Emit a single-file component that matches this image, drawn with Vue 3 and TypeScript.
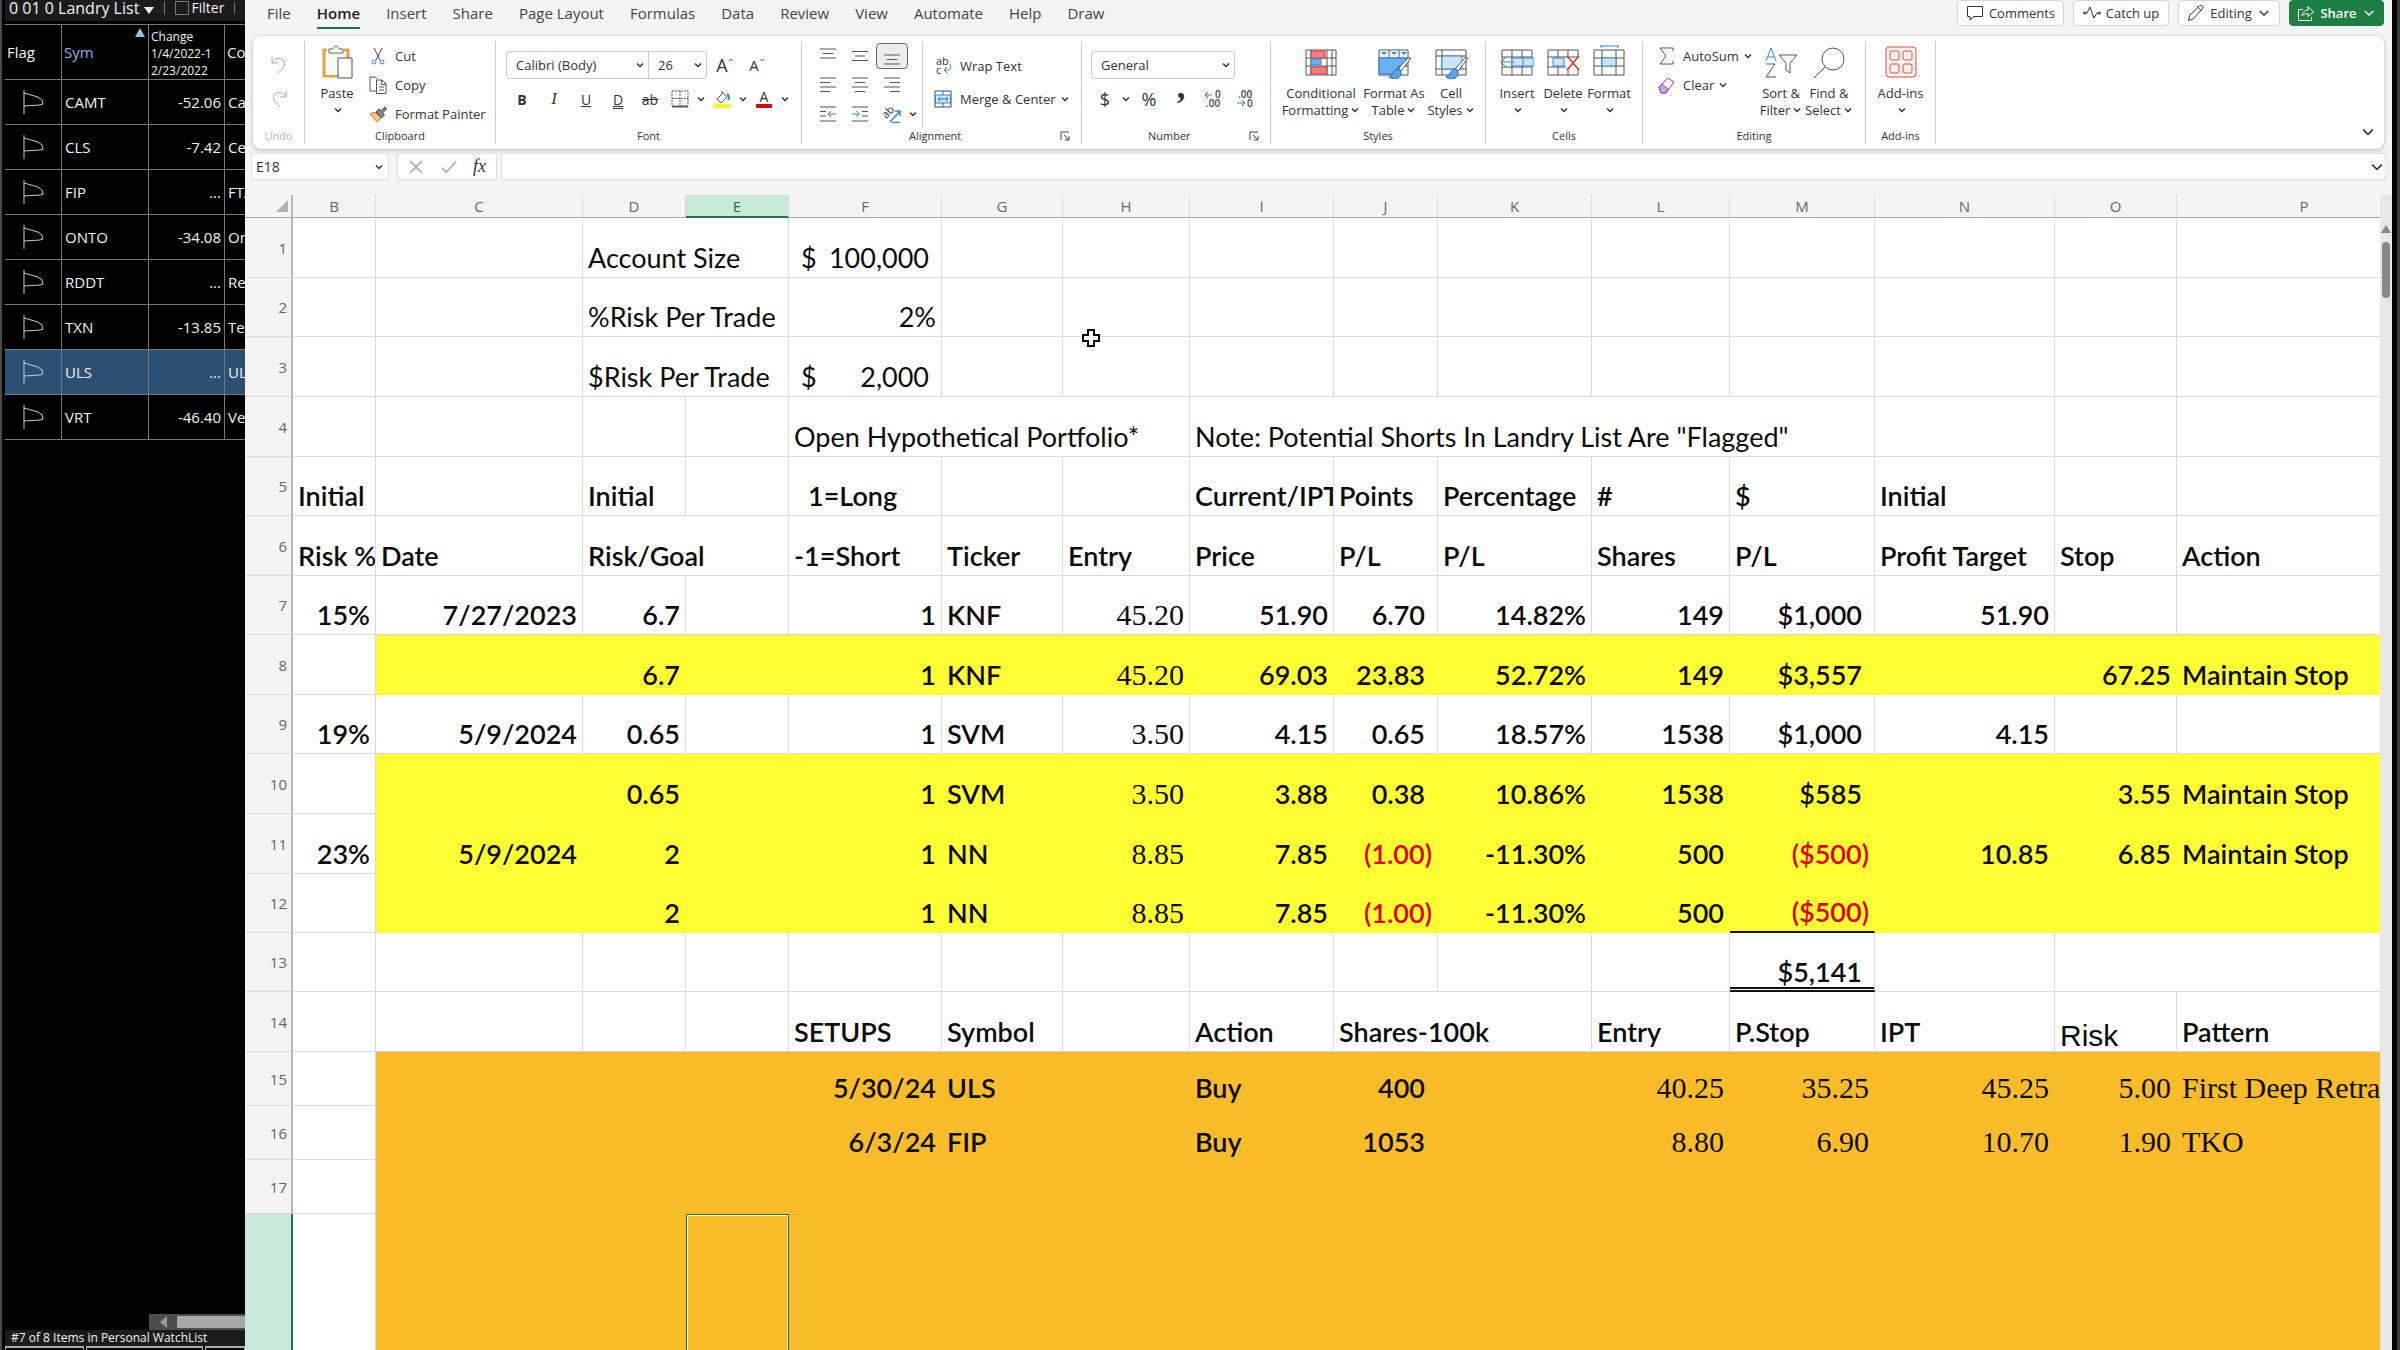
<script setup lang="ts">
import { h, ref } from 'vue'

const Chevron = () =>
  h('svg', { class: 'chev', viewBox: '0 0 10 10', 'aria-hidden': 'true' }, [
    h('path', { d: 'M2 3.5l3 3 3-3' }),
  ])

const Launcher = () =>
  h('svg', { class: 'launcher', viewBox: '0 0 10 10', 'aria-hidden': 'true' }, [
    h('path', { d: 'M1 9V1h8M4 4l5 5M9 5v4H5' }),
  ])

interface Quote {
  sym: string
  change: string
  company: string
}

const quotes: Quote[] = [
  { sym: 'CAMT', change: '-52.06', company: 'Ca' },
  { sym: 'CLS', change: '-7.42', company: 'Ce' },
  { sym: 'FIP', change: '...', company: 'FTA' },
  { sym: 'ONTO', change: '-34.08', company: 'On' },
  { sym: 'RDDT', change: '...', company: 'Re' },
  { sym: 'TXN', change: '-13.85', company: 'Te' },
  { sym: 'ULS', change: '...', company: 'UL' },
  { sym: 'VRT', change: '-46.40', company: 'Ve' },
]
const selectedSym = ref('ULS')

const tabs = [
  'File', 'Home', 'Insert', 'Share', 'Page Layout', 'Formulas',
  'Data', 'Review', 'View', 'Automate', 'Help', 'Draw',
]
const activeTab = ref('Home')
const fontName = ref('Calibri (Body)')
const fontSize = ref('26')
const numberFormat = ref('General')
const nameBox = ref('E18')
const formula = ref('')

const columns = [
  { id: 'B', w: 83 }, { id: 'C', w: 207 }, { id: 'D', w: 103 }, { id: 'E', w: 103 },
  { id: 'F', w: 153 }, { id: 'G', w: 121 }, { id: 'H', w: 127 }, { id: 'I', w: 144 },
  { id: 'J', w: 104 }, { id: 'K', w: 154 }, { id: 'L', w: 138 }, { id: 'M', w: 145 },
  { id: 'N', w: 180 }, { id: 'O', w: 122 }, { id: 'P', w: 0 },
]

// text, class names, number of columns covered
type Cell = [string, string?, number?]
interface Row {
  n: number
  h: number
  kind?: string
  cells: Record<string, Cell>
}

const rows: Row[] = [
  { n: 1, h: 60, kind: 'plain', cells: { D: ['Account Size', '', 2], F: ['100,000', 'money'] } },
  { n: 2, h: 59, kind: 'plain', cells: { D: ['%Risk Per Trade', '', 2], F: ['2%', 'r'] } },
  { n: 3, h: 60, kind: 'plain', cells: { D: ['$Risk Per Trade', '', 2], F: ['2,000', 'money'] } },
  {
    n: 4, h: 60, kind: 'plain',
    cells: {
      F: ['Open Hypothetical Portfolio*', '', 3],
      I: ['Note: Potential Shorts In Landry List Are "Flagged"', '', 5],
    },
  },
  {
    n: 5, h: 59,
    cells: {
      B: ['Initial'], D: ['Initial'], F: ['1=Long', 'indent'], I: ['Current/IPT'], J: ['Points'],
      K: ['Percentage'], L: ['#'], M: ['$'], N: ['Initial'],
    },
  },
  {
    n: 6, h: 60,
    cells: {
      B: ['Risk %'], C: ['Date'], D: ['Risk/Goal', '', 2], F: ['-1=Short'], G: ['Ticker'],
      H: ['Entry'], I: ['Price'], J: ['P/L'], K: ['P/L'], L: ['Shares'], M: ['P/L'],
      N: ['Profit Target'], O: ['Stop'], P: ['Action'],
    },
  },
  {
    n: 7, h: 59,
    cells: {
      B: ['15%', 'r'], C: ['7/27/2023', 'r'], D: ['6.7', 'r'], F: ['1', 'r'], G: ['KNF'],
      H: ['45.20', 'r serif'], I: ['51.90', 'r'], J: ['6.70', 'acct'], K: ['14.82%', 'r'],
      L: ['149', 'r'], M: ['$1,000', 'acct'], N: ['51.90', 'r'],
    },
  },
  {
    n: 8, h: 60, kind: 'yellow',
    cells: {
      D: ['6.7', 'r'], F: ['1', 'r'], G: ['KNF'], H: ['45.20', 'r serif'], I: ['69.03', 'r'],
      J: ['23.83', 'acct'], K: ['52.72%', 'r'], L: ['149', 'r'], M: ['$3,557', 'acct'],
      O: ['67.25', 'r'], P: ['Maintain Stop'],
    },
  },
  {
    n: 9, h: 59,
    cells: {
      B: ['19%', 'r'], C: ['5/9/2024', 'r'], D: ['0.65', 'r'], F: ['1', 'r'], G: ['SVM'],
      H: ['3.50', 'r serif'], I: ['4.15', 'r'], J: ['0.65', 'acct'], K: ['18.57%', 'r'],
      L: ['1538', 'r'], M: ['$1,000', 'acct'], N: ['4.15', 'r'],
    },
  },
  {
    n: 10, h: 60, kind: 'yellow',
    cells: {
      D: ['0.65', 'r'], F: ['1', 'r'], G: ['SVM'], H: ['3.50', 'r serif'], I: ['3.88', 'r'],
      J: ['0.38', 'acct'], K: ['10.86%', 'r'], L: ['1538', 'r'], M: ['$585', 'acct'],
      O: ['3.55', 'r'], P: ['Maintain Stop'],
    },
  },
  {
    n: 11, h: 60, kind: 'yellow',
    cells: {
      B: ['23%', 'r'], C: ['5/9/2024', 'r'], D: ['2', 'r'], F: ['1', 'r'], G: ['NN'],
      H: ['8.85', 'r serif'], I: ['7.85', 'r'], J: ['(1.00)', 'r neg'], K: ['-11.30%', 'r'],
      L: ['500', 'r'], M: ['($500)', 'r neg'], N: ['10.85', 'r'], O: ['6.85', 'r'],
      P: ['Maintain Stop'],
    },
  },
  {
    n: 12, h: 59, kind: 'yellow',
    cells: {
      D: ['2', 'r'], F: ['1', 'r'], G: ['NN'], H: ['8.85', 'r serif'], I: ['7.85', 'r'],
      J: ['(1.00)', 'r neg'], K: ['-11.30%', 'r'], L: ['500', 'r'], M: ['($500)', 'r neg subtotal'],
    },
  },
  { n: 13, h: 59, cells: { M: ['$5,141', 'acct total'], O: ['', '', 2] } },
  {
    n: 14, h: 60,
    cells: {
      F: ['SETUPS'], G: ['Symbol'], I: ['Action'], J: ['Shares-100k', '', 2], L: ['Entry'],
      M: ['P.Stop'], N: ['IPT'], O: ['Risk', 'sans'], P: ['Pattern'],
    },
  },
  {
    n: 15, h: 54, kind: 'orange',
    cells: {
      F: ['5/30/24', 'r'], G: ['ULS'], I: ['Buy'], J: ['400', 'acct'], L: ['40.25', 'r serif'],
      M: ['35.25', 'r serif'], N: ['45.25', 'r serif'], O: ['5.00', 'r serif'],
      P: ['First Deep Retra', 'serif'],
    },
  },
  {
    n: 16, h: 54, kind: 'orange',
    cells: {
      F: ['6/3/24', 'r'], G: ['FIP'], I: ['Buy'], J: ['1053', 'acct'], L: ['8.80', 'r serif'],
      M: ['6.90', 'r serif'], N: ['10.70', 'r serif'], O: ['1.90', 'r serif'], P: ['TKO', 'serif'],
    },
  },
  { n: 17, h: 54, kind: 'orange', cells: {} },
  { n: 18, h: 240, kind: 'orange', cells: { E: ['', 'selected'] } },
]

function cellsOf(row: Row) {
  const out: { id: string; text: string; cls: string; span: number }[] = []
  for (let i = 0; i < columns.length; ) {
    const id = columns[i].id
    const [text, cls, span] = row.cells[id] ?? ['']
    out.push({ id, text, cls: (cls ?? '') + (id === 'B' ? ' first' : ''), span: span ?? 1 })
    i += span ?? 1
  }
  return out
}
</script>

<template>
  <div class="screen">
    <aside class="watch">
      <header class="watch-title">
        <button class="list-name" type="button">0 01 0 Landry List <i class="tri-down"></i></button>
        <span class="bar"></span>
        <label class="filter"><input type="checkbox" />Filter</label>
        <span class="bar"></span>
      </header>
      <table class="quotes">
        <colgroup><col class="q-flag" /><col class="q-sym" /><col class="q-chg" /><col /></colgroup>
        <thead>
          <tr>
            <th>Flag</th>
            <th class="sorted">Sym<i class="tri-up"></i></th>
            <th class="change-head">Change<br />1/4/2022-1<br />2/23/2022</th>
            <th>Co</th>
          </tr>
        </thead>
        <tbody>
          <tr v-for="q in quotes" :key="q.sym" :class="{ on: q.sym === selectedSym }" @click="selectedSym = q.sym">
            <td class="flag-cell">
              <svg class="flag" viewBox="0 0 22 26" aria-hidden="true"><path d="M2 1v24M2 4l14 4 4 3 1 4-3 1-16 1" /></svg>
            </td>
            <td>{{ q.sym }}</td>
            <td class="num">{{ q.change }}</td>
            <td>{{ q.company }}</td>
          </tr>
        </tbody>
      </table>
      <div class="watch-scroll"><i class="tri-left"></i><span class="watch-thumb"></span></div>
      <footer class="watch-status">#7 of 8 Items in Personal WatchList</footer>
      <div class="watch-tabs"><span></span><span></span><span></span></div>
    </aside>

    <main class="excel">
      <div class="menu">
        <nav class="tabs">
          <button v-for="t in tabs" :key="t" type="button" :class="{ active: t === activeTab }" @click="activeTab = t">{{ t }}</button>
        </nav>
        <div class="actions">
          <button type="button" class="w-comments">
            <svg viewBox="0 0 18 18"><path d="M1.500 2.500h15v10H8l-4 3.500v-3.500H1.500z" /></svg>Comments
          </button>
          <button type="button" class="w-catch">
            <svg viewBox="0 0 18 18"><path d="M1 9h3l3-6 4 11 3-5h3" /><circle cx="1.500" cy="9" r="1" /><circle cx="16.500" cy="9" r="1" /></svg>Catch up
          </button>
          <button type="button" class="w-editing">
            <svg viewBox="0 0 18 18"><path d="M1.500 16.500l1.200-5L12.500 1.700c2-1.500 4.500 1 3 3L5.800 15.200zM11 3.500l3.300 3.300" /></svg>Editing<Chevron />
          </button>
          <button type="button" class="share">
            <svg viewBox="0 0 18 18"><path d="M6 5.500H1.500v11h13V13M5 12c.5-4 3-6 6-6V2.500L16.500 8 11 12.500V9.500c-2.500 0-4.500.5-6 2.500z" /></svg>Share<Chevron />
          </button>
        </div>
      </div>

      <section class="ribbon">
        <div class="group g-undo">
          <div class="body stack">
            <button type="button" class="tool" aria-label="Undo"><svg viewBox="0 0 18 20"><path d="M2 2v6h6M2 8c3-5 8-6 11-3s2 7-5 13" /></svg></button>
            <button type="button" class="tool" aria-label="Redo"><svg viewBox="0 0 18 20"><path d="M16 2v6h-6M16 8C13 3 8 2 5 5s-2 7 5 13" /></svg></button>
          </div>
          <div class="label">Undo</div>
        </div>

        <div class="group g-clip">
          <div class="body">
            <button type="button" class="big w56">
              <svg viewBox="0 0 34 34">
                <path d="M7 5H4v26h14M24 5h4v8" stroke="#e8a33d" stroke-width="3" />
                <path d="M6 7h19v6h-8v17H6z" fill="#fafafa" stroke="none" />
                <path d="M9 8V4h4c0-4 6-4 6 0h4v4z" fill="#fff" stroke="#666" />
                <path d="M18 13h14v20H18z" fill="#fff" stroke="#555" />
              </svg>
              <span>Paste</span><span><Chevron /></span>
            </button>
            <div class="list">
              <button type="button"><svg viewBox="0 0 18 18"><path d="M5 1l6 12M13 1L7 13" stroke="#444" /><circle cx="5" cy="15" r="2" stroke="#2b88d8" /><circle cx="13" cy="15" r="2" stroke="#2b88d8" /></svg>Cut</button>
              <button type="button"><svg viewBox="0 0 18 18"><path d="M7 15H1V1h5l2 2" /><path d="M7.500 4H13l4 4v9.500H7.500zM12.500 4v4.500H17M10 11h5M10 14h5" /></svg>Copy</button>
              <button type="button"><svg viewBox="0 0 18 18"><path d="M1 9l5-2 6 6-4 4z" fill="#f7c58f" stroke="#d9782d" /><path d="M7 7l3-3 2 2 4-4 1.500 2-4 4 2 2-3 3z" fill="#888" stroke="#444" /></svg>Format Painter</button>
            </div>
          </div>
          <div class="label">Clipboard</div>
        </div>

        <div class="group g-font">
          <div class="body stack two">
            <div class="line">
              <div class="combo">
                <span class="pick font-name"><select v-model="fontName" aria-label="Font"><option>Calibri (Body)</option><option>Arial</option></select><Chevron /></span>
                <span class="pick font-size"><select v-model="fontSize" aria-label="Font size"><option>26</option><option>28</option></select><Chevron /></span>
              </div>
              <button type="button" class="tool" aria-label="Grow font"><span class="grow">A</span><svg class="caret" viewBox="0 0 6 6"><path d="M1 4l2-2 2 2" /></svg></button>
              <button type="button" class="tool" aria-label="Shrink font"><span class="shrink">A</span><svg class="caret" viewBox="0 0 6 6"><path d="M1 2l2 2 2-2" /></svg></button>
            </div>
            <div class="line">
              <button type="button" class="tool"><b>B</b></button>
              <button type="button" class="tool"><i class="ital">I</i></button>
              <button type="button" class="tool"><u>U</u></button>
              <button type="button" class="tool"><u class="dbl">D</u></button>
              <button type="button" class="tool"><s>ab</s></button>
              <button type="button" class="tool n" aria-label="Borders"><svg viewBox="0 0 18 18"><path d="M1 1h16v15M1 1v15M9 1v15M1 8.500h16" stroke-dasharray="2 1" /><path d="M1 16.500h16" stroke-width="2" /></svg></button><Chevron />
              <button type="button" class="tool n" aria-label="Fill color"><svg viewBox="0 0 18 18"><path d="M9 1v3M9 2l5 5-6 6-4-4 5-5" /><path d="M14 4c2 1 2 4 1.500 6" stroke="#2b88d8" stroke-width="2" /><path d="M0 16h18" stroke="#fbf22e" stroke-width="4" /></svg></button><Chevron />
              <button type="button" class="tool n" aria-label="Font color"><span class="font-color">A</span></button><Chevron />
            </div>
          </div>
          <div class="label">Font</div>
        </div>

        <div class="group g-align">
          <div class="body">
            <div class="aligns">
              <button type="button" aria-label="Top align"><svg viewBox="0 0 18 18"><path d="M1 2h16M4 6.500h10M1 11h16" /></svg></button>
              <button type="button" aria-label="Middle align"><svg viewBox="0 0 18 18"><path d="M1 4.500h16M4 9h10M1 13.500h16" /></svg></button>
              <button type="button" class="pressed" aria-label="Bottom align"><svg viewBox="0 0 18 18"><path d="M1 8h16M4 12.500h10M1 17h16" /></svg></button>
              <i></i>
              <button type="button" aria-label="Align left"><svg viewBox="0 0 18 18"><path d="M1 2h16M1 6.500h10M1 11h16M1 15.500h10" /></svg></button>
              <button type="button" aria-label="Center"><svg viewBox="0 0 18 18"><path d="M1 2h16M4 6.500h10M1 11h16M4 15.500h10" /></svg></button>
              <button type="button" aria-label="Align right"><svg viewBox="0 0 18 18"><path d="M1 2h16M7 6.500h10M1 11h16M7 15.500h10" /></svg></button>
              <i></i>
              <button type="button" aria-label="Decrease indent"><svg viewBox="0 0 18 18"><path d="M1 2h16M1 6.500h6M1 11h6M1 16h16" /><path d="M17 9H9.500M12 6L9 9l3 3" stroke="#2b88d8" /></svg></button>
              <button type="button" aria-label="Increase indent"><svg viewBox="0 0 18 18"><path d="M1 2h16M11 6.500h6M11 11h6M1 16h16" /><path d="M1 9h7M5.500 6l3 3-3 3" stroke="#2b88d8" /></svg></button>
              <button type="button" aria-label="Orientation"><svg viewBox="0 0 18 18"><path d="M7 17L17 6M17 11V6h-5M9 17.500h8" stroke="#2b88d8" stroke-width="1.500" /><text class="glyph" x="-1" y="11" transform="rotate(-45 5 8)">ab</text></svg></button>
              <Chevron />
            </div>
            <div class="list tall">
              <button type="button"><svg viewBox="0 0 18 18"><text class="glyph" x="2" y="8">ab</text><text class="glyph" x="2" y="17">c</text><path d="M16 7c2 5-1 7-6 6M13 10l-3 3 3 3" stroke="#2b88d8" /></svg>Wrap Text</button>
              <button type="button"><svg viewBox="0 0 18 18"><path d="M1 1h16v16H1z" fill="#fff" stroke="#444" /><path d="M1.500 5h15v8h-15z" fill="#cfe4f7" stroke="#2b88d8" /><path d="M9 1v4M9 13v4M4 9h10M6 7L4 9l2 2M12 7l2 2-2 2" stroke="#2b6cb0" /></svg>Merge &amp; Center<Chevron /></button>
            </div>
          </div>
          <div class="label">Alignment<Launcher /></div>
        </div>

        <div class="group g-number">
          <div class="body stack two">
            <div class="line">
              <span class="pick boxed"><select v-model="numberFormat" aria-label="Number format"><option>General</option><option>Currency</option></select><Chevron /></span>
            </div>
            <div class="line">
              <button type="button" class="tool n"><span class="sym">$</span></button><Chevron />
              <button type="button" class="tool"><span class="sym">%</span></button>
              <button type="button" class="tool"><b class="comma">,</b></button>
              <button type="button" class="tool" aria-label="Increase decimal"><svg viewBox="0 0 18 18"><path d="M8 5H1M4 2L1 5l3 3" stroke="#2b88d8" /><text class="digits" x="11" y="8">0</text><text class="digits" x="2" y="17">.00</text></svg></button>
              <button type="button" class="tool" aria-label="Decrease decimal"><svg viewBox="0 0 18 18"><path d="M1 13h8M6 10l3 3-3 3" stroke="#2b88d8" /><text class="digits" x="2" y="8">.00</text><text class="digits" x="11" y="17">0</text></svg></button>
            </div>
          </div>
          <div class="label">Number<Launcher /></div>
        </div>

        <div class="group g-styles">
          <div class="body">
            <button type="button" class="big w80">
              <svg viewBox="0 0 34 34"><path d="M2 5h30v25H2zM2 13h30M2 21h30M7 5v25M23 5v25M28 5v25" /><path d="M7 6h14v7H7zM7 22h16v7H7z" fill="#ff7a85" stroke="#d13438" /><path d="M7 14h10v6H7z" fill="#6cb2f0" stroke="#2b88d8" /></svg>
              <span>Conditional</span><span>Formatting<Chevron /></span>
            </button>
            <button type="button" class="big w66">
              <svg viewBox="0 0 34 34"><path d="M2 5h29v25H2zM2 13h29M2 21h29M12 5v25M22 5v25" /><path d="M2 13h27v8h-8v8H2z" fill="#6cb2f0" stroke="#2b78c8" /><path d="M4 7h6l-3 3zM14 7h6l-3 3zM24 7h6l-3 3z" fill="#2b88d8" stroke="none" /><path d="M34 13L24 26l-3-2L31 13z" fill="#fff" /><path d="M22 24c-5-1-5 5-10 8 6 4 13 1 12-5z" fill="#5ba5e6" stroke="#2b6cb0" /></svg>
              <span>Format As</span><span>Table<Chevron /></span>
            </button>
            <button type="button" class="big w48">
              <svg viewBox="0 0 34 34"><path d="M2 5h30v25H2zM2 11h30M8 5v25M2 24h30" /><path d="M8 11h20v13H8z" fill="#cfe4f7" stroke="#2b88d8" /><path d="M34 13L24 26l-3-2L31 13z" fill="#fff" /><path d="M22 24c-5-1-5 5-10 8 6 4 13 1 12-5z" fill="#5ba5e6" stroke="#2b6cb0" /></svg>
              <span>Cell</span><span>Styles<Chevron /></span>
            </button>
          </div>
          <div class="label">Styles</div>
        </div>

        <div class="group g-cells">
          <div class="body">
            <button type="button" class="big w46">
              <svg viewBox="0 0 34 34"><path d="M2 5h30v25H2zM2 12h30M2 22h30M12 5v25M22 5v25" /><path d="M12 13h22v8H12z" fill="#cfe4f7" stroke="#2b88d8" /><path d="M14 17H1M6 12l-5 5 5 5M23 13v8" stroke="#2b88d8" /></svg>
              <span>Insert</span><span><Chevron /></span>
            </button>
            <button type="button" class="big w46">
              <svg viewBox="0 0 34 34"><path d="M2 5h30v7M2 5v25h30v-6M2 12h30M2 22h18M12 5v25M22 5v7M22 23v7" /><path d="M7 13h11v8H7z" fill="#cfe4f7" stroke="#2b88d8" /><path d="M21 11l12 14M33 11L21 25" stroke="#e03030" stroke-width="1.500" /></svg>
              <span>Delete</span><span><Chevron /></span>
            </button>
            <button type="button" class="big w46">
              <svg viewBox="0 0 34 34"><path d="M2 5h30v25H2zM2 13h30M2 21h30M10 5v25M24 5v25" /><path d="M10 13h14v8H10z" fill="#cfe4f7" stroke="#2b88d8" /><path d="M9 1h17M9 0v3M26 0v3" stroke="#2b88d8" /></svg>
              <span>Format</span><span><Chevron /></span>
            </button>
          </div>
          <div class="label">Cells</div>
        </div>

        <div class="group g-edit">
          <div class="body">
            <div class="list">
              <button type="button"><svg viewBox="0 0 18 18"><path d="M16 4V1H3l6 8-6 8h13v-3" /></svg>AutoSum<Chevron /></button>
              <button type="button"><svg viewBox="0 0 18 18"><path d="M2 11l9-9 6 4-8 11H4z" fill="#fff" stroke="#8e44ad" /><path d="M2 11l3-3 6 5-3 4H4z" fill="#d6a2e8" stroke="#8e44ad" /></svg>Clear<Chevron /></button>
            </div>
            <button type="button" class="big w48">
              <svg viewBox="0 0 34 34"><path d="M2 16L7 3l5 13M4 12h6" stroke="#2b88d8" /><path d="M2 19h9L2 32h10M15 10h18l-7 8v10l-4-3v-7z" /></svg>
              <span>Sort &amp;</span><span>Filter<Chevron /></span>
            </button>
            <button type="button" class="big w48">
              <svg viewBox="0 0 34 34"><circle cx="21" cy="14" r="11" /><path d="M13 22L2 33" /></svg>
              <span>Find &amp;</span><span>Select<Chevron /></span>
            </button>
          </div>
          <div class="label">Editing</div>
        </div>

        <div class="group g-add">
          <div class="body">
            <button type="button" class="big w66">
              <svg viewBox="0 0 34 34" class="red"><rect x="2" y="2" width="30" height="30" rx="3" fill="#fdf1ef" /><rect x="6" y="6" width="9" height="9" rx="2" /><rect x="19" y="6" width="9" height="9" rx="2" /><rect x="6" y="19" width="9" height="9" rx="2" /><rect x="19" y="19" width="9" height="9" rx="2" /></svg>
              <span>Add-ins</span><span><Chevron /></span>
            </button>
          </div>
          <div class="label">Add-ins</div>
        </div>
        <button type="button" class="collapse" aria-label="Collapse ribbon"><Chevron /></button>
      </section>

      <section class="formula">
        <div class="name-box"><input v-model="nameBox" aria-label="Name box" /><Chevron /></div>
        <div class="fx">
          <svg viewBox="0 0 16 16"><path d="M1 1l14 14M15 1L1 15" /></svg>
          <svg viewBox="0 0 18 16"><path d="M1 9l5 5L17 2" /></svg>
          <em>fx</em>
        </div>
        <div class="formula-box"><input v-model="formula" aria-label="Formula" /><Chevron /></div>
      </section>

      <section class="sheet">
        <div class="viewport">
          <table class="grid">
            <colgroup>
              <col class="c-num" />
              <col v-for="c in columns" :key="c.id" :style="c.w ? { width: c.w + 'px' } : undefined" />
            </colgroup>
            <thead>
              <tr>
                <th class="corner"><i></i></th>
                <th v-for="c in columns" :key="c.id" scope="col" :class="{ hot: c.id === 'E' }">{{ c.id }}</th>
              </tr>
            </thead>
            <tbody>
              <tr v-for="r in rows" :key="r.n" :class="r.kind" :style="{ height: r.h + 'px' }">
                <th scope="row" :class="{ hot: r.n === 18 }">{{ r.n === 18 ? '' : r.n }}</th>
                <td v-for="c in cellsOf(r)" :key="c.id" :class="c.cls" :colspan="c.span">
                  <div v-if="c.cls === 'money'" class="split"><span>$</span><span>{{ c.text }}</span></div>
                  <template v-else>{{ c.text }}</template>
                </td>
              </tr>
            </tbody>
          </table>
        </div>
        <div class="vscroll"><i class="tri-top"></i><span class="vthumb"></span></div>
      </section>
    </main>
    <div class="edge"></div>

    <svg class="cursor" viewBox="0 0 20 20" aria-hidden="true"><path d="M7 2h6v5h5v6h-5v5H7v-5H2V7h5z" /></svg>
  </div>
</template>

<style>
body {
  background: #000;
}
</style>

<style scoped>
* {
  box-sizing: border-box;
}
.screen {
  position: relative;
  display: flex;
  height: 100vh;
  overflow: hidden;
  background: #000;
  font-family: "Open Sans", "Noto Sans", sans-serif;
  font-size: 13px;
  color: #333;
}
button,
input,
select {
  font: inherit;
  color: inherit;
  background: none;
  border: 0;
  padding: 0;
  margin: 0;
  outline: 0;
}
button {
  white-space: nowrap;
}
svg {
  fill: none;
  stroke: #555;
  flex: none;
}

/* Watch list */
.watch {
  width: 245px;
  flex: none;
  display: flex;
  flex-direction: column;
  overflow: hidden;
  padding-left: 3px;
  border-left: 2px solid #4a4a4a;
  color: #f2f2f2;
  font-size: 15px;
}
.watch-title {
  height: 21px;
  flex: none;
  display: flex;
  align-items: center;
  gap: 10px;
  padding: 0 0 5px 4px;
  background: #1b1b1b;
  font-size: 16px;
  line-height: 16px;
}
.watch-title .bar {
  width: 1px;
  height: 12px;
  background: #777;
}
.watch-title .filter {
  display: flex;
  align-items: center;
  gap: 3px;
  font-size: 14px;
}
.filter input {
  appearance: none;
  width: 14px;
  height: 14px;
  border: 1px solid #777;
}
.tri-down {
  display: inline-block;
  border: 5px solid transparent;
  border-top: 7px solid #eee;
  border-bottom: 0;
}
.quotes {
  width: 100%;
  margin-top: 3px;
  table-layout: fixed;
  border-spacing: 0;
  border-top: 1px solid #777;
}
.q-flag { width: 57px; }
.q-sym { width: 87px; }
.q-chg { width: 76px; }
.quotes th,
.quotes td {
  height: 45px;
  padding: 0 3px;
  overflow: hidden;
  white-space: nowrap;
  text-align: left;
  font-weight: 400;
  border-right: 1px solid #777;
  border-bottom: 1px solid #777;
}
.quotes th:last-child,
.quotes td:last-child {
  padding-right: 0;
  border-right: 0;
}
.quotes th {
  height: 55px;
  padding-left: 2px;
}
.quotes .change-head {
  font-size: 12px;
  line-height: 17px;
  vertical-align: bottom;
}
.quotes .sorted {
  position: relative;
  color: #8fb8e0;
}
.tri-up {
  position: absolute;
  top: 3px;
  right: 3px;
  border: 5px solid transparent;
  border-bottom: 9px solid #8cc7e6;
  border-top: 0;
}
.quotes .num {
  text-align: right;
}
.quotes .flag-cell {
  padding-left: 17px;
}
.flag {
  display: block;
  width: 22px;
  height: 26px;
  stroke: #ccc;
}
.quotes .on {
  background: #2c5073;
}
.watch-scroll {
  margin: auto 0 0 144px;
  height: 16px;
  flex: none;
  display: flex;
  align-items: center;
  gap: 10px;
  padding-left: 11px;
  background: #4c4c4c;
}
.tri-left {
  border: 6px solid transparent;
  border-right: 7px solid #999;
  border-left: 0;
}
.watch-thumb {
  flex: 1;
  height: 12px;
  background: #a8a8a8;
}
.watch-status {
  height: 16px;
  flex: none;
  padding-left: 6px;
  background: #1b1b1b;
  font-size: 12px;
  line-height: 16px;
  white-space: nowrap;
}
.watch-tabs {
  height: 4px;
  flex: none;
  display: flex;
  gap: 2px;
}
.watch-tabs span {
  flex: 2;
  border: 1px solid #aaa;
  border-top-width: 2px;
  border-bottom: 0;
}
.watch-tabs span:nth-child(2) {
  flex: 3;
}
.watch-tabs span:last-child {
  flex: 1;
}

/* Spreadsheet window */
.excel {
  flex: 1;
  min-width: 0;
  display: flex;
  flex-direction: column;
  background: #f4f4f4;
}
.chev {
  width: 10px;
  height: 10px;
  stroke: #333;
  stroke-width: 1.5;
}
.menu {
  height: 36px;
  flex: none;
  display: flex;
  justify-content: space-between;
  align-items: flex-start;
  padding: 0 8px 0 22px;
}
.tabs {
  display: flex;
  gap: 26px;
  font-size: 15px;
}
.tabs button {
  height: 29px;
  padding-bottom: 2px;
  border-bottom: 2px solid transparent;
  color: #444;
}
.tabs .active {
  font-weight: 600;
  color: #222;
  border-color: #217346;
}
.actions {
  display: flex;
  gap: 9px;
}
.actions button {
  height: 26px;
  display: flex;
  align-items: center;
  justify-content: center;
  gap: 5px;
  background: #fff;
  border: 1px solid #d4d4d4;
  border-radius: 4px;
}
.actions svg {
  width: 18px;
  height: 18px;
  stroke: #333;
}
.actions .chev {
  width: 14px;
  height: 14px;
  stroke-width: 1;
}
.w-comments { width: 107px; }
.w-catch { width: 96px; }
.w-editing { width: 102px; }
.actions .share {
  width: 95px;
  background: #1f7f43;
  border-color: #1f7f43;
  color: #fff;
  font-weight: 600;
}
.actions .share svg {
  stroke: #fff;
}

.ribbon {
  height: 113px;
  flex: none;
  display: flex;
  margin: 0 8px;
  padding: 5px 0;
  background: #fff;
  border-radius: 8px;
  box-shadow: 0 1px 4px rgba(0, 0, 0, 0.25);
}
.group {
  display: flex;
  flex-direction: column;
  flex: none;
  border-right: 1px solid #c8c8c8;
}
.g-undo { width: 52px; }
.g-clip { width: 191px; }
.g-font { width: 306px; }
.g-align { width: 280px; }
.g-number { width: 189px; }
.g-styles { width: 215px; }
.g-cells { width: 157px; }
.g-edit { width: 223px; }
.g-add { width: 70px; }
.g-clip .body { padding-left: 4px; gap: 4px; }
.g-font .body { padding-left: 10px; }
.g-align .body { padding-left: 10px; }
.g-number .body { padding-left: 9px; }
.g-styles .body { padding-left: 10px; }
.g-cells .body { padding-left: 8px; }
.g-edit .body { padding-left: 14px; }
.g-edit .list { width: 100px; }
.g-add .body { justify-content: center; }
.g-undo .tool svg { stroke: #aaa; width: 18px; height: 20px; }
.g-undo .label { color: #b5b5b5; }
.g-undo .tool { width: 51px; }
.body {
  height: 87px;
  display: flex;
}
.stack {
  flex-direction: column;
  padding-top: 10px;
  gap: 6px;
}
.line {
  display: flex;
  align-items: center;
  height: 28px;
}
.line .chev {
  margin: 0 2px;
}
.label {
  height: 16px;
  display: flex;
  align-items: center;
  justify-content: center;
  font-size: 11px;
  line-height: 16px;
}
.launcher {
  width: 10px;
  height: 10px;
  margin-left: auto;
  margin-right: 11px;
  stroke: #444;
}
.g-align .label {
  padding-left: 107px;
}
.g-number .label {
  padding-left: 66px;
}
.tool {
  width: 32px;
  height: 28px;
  display: flex;
  align-items: center;
  justify-content: center;
  font-size: 14px;
}
.tool.n {
  width: 28px;
}
.tool svg {
  width: 18px;
  height: 18px;
}
.tool .caret {
  width: 6px;
  height: 6px;
  margin-bottom: 10px;
  stroke: #2b88d8;
}
.grow {
  font-size: 18px;
}
.shrink {
  font-size: 15px;
}
.ital {
  font-family: "Liberation Serif", serif;
  font-size: 17px;
}
.dbl {
  text-decoration-style: double;
}
.font-color {
  line-height: 14px;
  padding: 0 4px;
  border-bottom: 4px solid #d0021b;
}
.sym {
  font-size: 18px;
}
.comma {
  font-family: "Liberation Serif", serif;
  font-size: 34px;
  line-height: 10px;
  padding-bottom: 24px;
}
.combo {
  display: flex;
  width: 201px;
  height: 28px;
  margin-right: 2px;
  border: 1px solid #c8c8c8;
  border-radius: 4px;
}
.pick {
  display: flex;
  align-items: center;
}
.pick select {
  flex: 1;
  height: 26px;
  padding-left: 9px;
  appearance: none;
}
.pick .chev {
  margin: 0 3px 0 -13px;
  pointer-events: none;
}
.font-name {
  width: 142px;
  border-right: 1px solid #c8c8c8;
}
.font-size {
  flex: 1;
}
.boxed {
  width: 144px;
  height: 28px;
  border: 1px solid #c8c8c8;
  border-radius: 4px;
}
.aligns {
  display: grid;
  grid-template-columns: 32px 32px 32px 10px;
  grid-template-rows: 29px 29px 29px;
  align-items: center;
  padding-right: 4px;
  border-right: 1px solid #c8c8c8;
  width: 111px;
}
.aligns button {
  height: 26px;
  display: flex;
  align-items: center;
  justify-content: center;
}
.aligns svg {
  width: 18px;
  height: 18px;
}
.aligns .chev {
  width: 10px;
  height: 10px;
}
.aligns .pressed {
  background: #ececec;
  border: 1px solid #666;
  border-radius: 4px;
}
.glyph {
  font-size: 11px;
  fill: #333;
  stroke: none;
}
.digits {
  font-size: 10px;
  font-weight: 600;
  fill: #444;
  stroke: none;
}
.list button {
  height: 29px;
  display: flex;
  align-items: center;
  gap: 8px;
}
.list svg {
  width: 18px;
  height: 18px;
}
.list .chev {
  width: 10px;
  height: 10px;
  margin-left: -4px;
}
.tall {
  padding: 8px 0 0 11px;
}
.tall button {
  height: 33px;
}
.big {
  display: flex;
  flex-direction: column;
  align-items: center;
  padding-top: 4px;
  line-height: 17px;
}
.big svg {
  width: 34px;
  height: 34px;
  margin-bottom: 6px;
}
.big .chev {
  width: 10px;
  height: 10px;
  margin: 0 0 0 2px;
}
.big .red {
  stroke: #c8574a;
}
.w46 { width: 46px; }
.w48 { width: 48px; }
.w56 { width: 56px; }
.w66 { width: 66px; }
.w80 { width: 80px; }
.collapse {
  align-self: flex-end;
  height: 20px;
  margin: 0 8px 0 auto;
}
.collapse .chev,
.formula-box .chev {
  width: 16px;
  height: 16px;
  stroke-width: 1;
}

.formula {
  display: flex;
  flex: none;
  height: 46px;
  padding: 4px 6px 15px;
}
.name-box,
.fx,
.formula-box {
  display: flex;
  align-items: center;
  background: #fff;
  border: 1px solid #e0e0e0;
}
.name-box {
  width: 138px;
  margin-right: 8px;
  padding: 0 4px;
}
.name-box input {
  flex: 1;
  min-width: 0;
  font-size: 14px;
}
.fx {
  width: 100px;
  margin-right: 4px;
  padding: 0 10px;
  justify-content: space-between;
}
.fx svg {
  width: 16px;
  height: 14px;
  stroke: #b0b0b0;
  stroke-width: 2;
}
.fx em {
  font-family: "Liberation Serif", serif;
  font-size: 18px;
  color: #333;
}
.formula-box {
  flex: 1;
}
.formula-box input {
  flex: 1;
}

.sheet {
  flex: 1;
  min-height: 0;
  display: flex;
  align-items: flex-start;
  overflow: hidden;
}
.viewport {
  flex: 1;
  min-width: 0;
  overflow: hidden;
}
/* The last column runs on beyond the visible part of the sheet. */
.grid {
  width: calc(100% + 52px);
  table-layout: fixed;
  border-spacing: 0;
  background: #fff;
  color: #0c0c0c;
  font-family: Lato, "Open Sans", sans-serif;
  font-size: 27px;
  font-weight: 600;
  line-height: 30px;
}
.c-num {
  width: 48px;
}
.grid th {
  padding: 0;
  background: #f4f4f4;
  color: #666;
  font-family: "Open Sans", "Noto Sans", sans-serif;
  font-size: 15px;
  font-weight: 400;
  line-height: 20px;
}
.grid thead th {
  height: 23px;
  border-right: 1px solid #dcdcdc;
  border-bottom: 1px solid #a8a8a8;
}
.grid thead .corner {
  border-right: 2px solid #b8b8b8;
}
.corner i {
  display: block;
  width: 0;
  margin-left: auto;
  margin-right: 3px;
  border-left: 12px solid transparent;
  border-bottom: 12px solid #b0b0b0;
}
.grid thead .hot {
  background: #caead8;
  border-bottom: 2px solid #217346;
  color: #217346;
}
.grid tbody th {
  text-align: right;
  padding-right: 4px;
  border-right: 2px solid #b8b8b8;
  border-bottom: 1px solid #dcdcdc;
}
.grid tbody .hot {
  background: #caead8;
  border-right-color: #217346;
}
.grid td {
  height: inherit;
  padding: 0 5px 4px;
  vertical-align: bottom;
  white-space: nowrap;
  overflow: hidden;
  border-right: 1px solid #dcdcdc;
  border-bottom: 1px solid #dcdcdc;
}
.plain td {
  font-weight: 400;
}
.grid .r {
  text-align: right;
}
.grid .acct {
  text-align: right;
  padding-right: 12px;
}
.grid .indent {
  padding-left: 19px;
}
.grid .money {
  padding: 0 12px 4px;
}
.split {
  display: flex;
  justify-content: space-between;
}
.grid .serif {
  font-family: "Liberation Serif", serif;
  font-size: 30px;
  font-weight: 400;
}
.grid .sans {
  font-family: "Liberation Sans", sans-serif;
  font-size: 30px;
  font-weight: 400;
  padding-bottom: 0;
}
.grid .neg {
  color: #e00000;
}
.yellow td:not(.first) {
  background: #ffff33;
  border-color: #ffff33;
}
.orange td {
  padding-bottom: 2px;
}
.orange td:not(.first) {
  background: #fbbc29;
  border-color: #fbbc29;
}
.yellow .subtotal:not(.first) {
  border-bottom: 2px solid #111;
}
.grid .total {
  border-bottom: 5px double #111;
  padding-bottom: 0;
}
.orange .selected:not(.first) {
  border: 1px solid #217346;
  box-shadow: inset 0 0 0 1px #fbeec8;
}
.vscroll {
  width: 12px;
  height: 100%;
  flex: none;
  display: flex;
  flex-direction: column;
  align-items: center;
  padding-top: 30px;
  background: #e8e8e8;
}
.tri-top {
  border: 5px solid transparent;
  border-bottom: 8px solid #888;
  border-top: 0;
}
.vthumb {
  width: 8px;
  height: 56px;
  margin-top: 9px;
  border-radius: 4px;
  background: #888;
}
.edge {
  width: 8px;
  flex: none;
  border-right: 3px solid #3a3a3a;
}
.cursor {
  position: absolute;
  left: 1081px;
  top: 328px;
  width: 20px;
  height: 20px;
  fill: #fff;
  stroke: #000;
  stroke-width: 2;
}
</style>
